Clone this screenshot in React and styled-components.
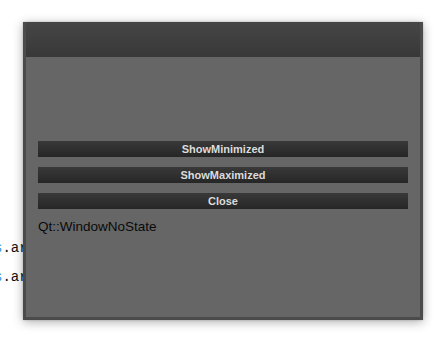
import React from 'react'
import styled, { createGlobalStyle } from 'styled-components'

const Global = createGlobalStyle`
  html, body {
    margin: 0;
    padding: 0;
    background: #ffffff;
  }
`

const Desktop = styled.div`
  position: relative;
  width: 445px;
  height: 339px;
  overflow: hidden;
  background: #ffffff;
`

// editor text peeking out behind the window
const Backdrop = styled.div`
  padding-top: 234px;
  margin-left: -6px;
  font-family: "Liberation Mono", "DejaVu Sans Mono", monospace;
  font-size: 14px;
  line-height: 29px;
  color: #111;
  white-space: pre;
`

const Ident = styled.span`
  color: #3a8fd8;
`

const Window = styled.div`
  position: absolute;
  left: 23px;
  top: 22px;
  width: 400px;
  height: 298px;
  box-sizing: border-box;
  display: flex;
  flex-direction: column;
  background: #4b4b4b;
  border: 3px solid #4b4b4b;
  border-top: none;
  box-shadow: 0 2px 10px rgba(0, 0, 0, 0.32), 0 0 2px rgba(0, 0, 0, 0.2);
`

const TitleBar = styled.div`
  height: 35px;
  flex-shrink: 0;
  background: linear-gradient(#464646, #383838);
`

const Content = styled.div`
  flex: 1;
  display: flex;
  flex-direction: column;
  gap: 10px;
  padding: 84px 12px 0;
  background: #666666;
`

const Button = styled.div`
  height: 16px;
  display: flex;
  align-items: center;
  justify-content: center;
  background: linear-gradient(#393939, #262626);
  color: #dcdcdc;
  font-family: "Liberation Sans", Arial, sans-serif;
  font-weight: bold;
  font-size: 11px;
`

const StateLabel = styled.div`
  font-family: "Liberation Sans", Arial, sans-serif;
  font-size: 13.5px;
  line-height: 16px;
  color: #0a0a0a;
`

export default function App() {
  return (
    <Desktop>
      <Global />
      <Backdrop>
        <div><Ident>s</Ident>.arrange(items)</div>
        <div><Ident>s</Ident>.arrange(rows)</div>
      </Backdrop>
      <Window>
        <TitleBar />
        <Content>
          <Button>ShowMinimized</Button>
          <Button>ShowMaximized</Button>
          <Button>Close</Button>
          <StateLabel>Qt::WindowNoState</StateLabel>
        </Content>
      </Window>
    </Desktop>
  )
}
